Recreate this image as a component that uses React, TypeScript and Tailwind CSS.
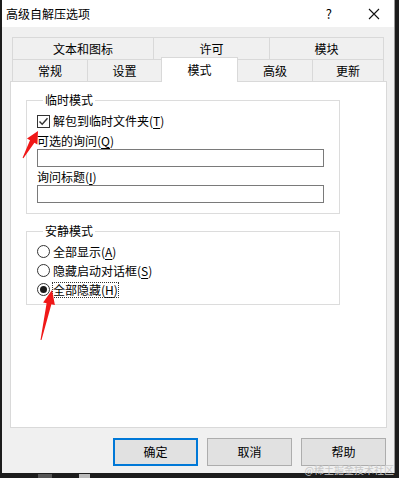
import React from "react";

const font = { fontFamily: '"Noto Sans CJK SC", "Noto Sans", sans-serif' };

function Tab({ label, w, last }: { label: string; w: string; last?: boolean }) {
  return (
    <div
      className={`${w} h-full flex items-center justify-center border-t border-l border-[#d9d9d9] ${last ? "border-r" : ""} text-[12px] text-black`}
    >
      {label}
    </div>
  );
}

function Checkbox() {
  return (
    <span className="w-[13px] h-[13px] border border-[#333] bg-white flex items-center justify-center shrink-0">
      <svg width="11" height="11" viewBox="0 0 11 11">
        <path d="M1.5 5.5 L4.2 8.3 L9.5 2.2" fill="none" stroke="#333" strokeWidth="1.4" />
      </svg>
    </span>
  );
}

function Radio({ on }: { on?: boolean }) {
  return (
    <span className="w-[13px] h-[13px] rounded-full border border-[#333] bg-white flex items-center justify-center shrink-0">
      {on && <span className="w-[7px] h-[7px] rounded-full bg-[#1a1a1a]" />}
    </span>
  );
}

function U({ c }: { c: string }) {
  return <span className="underline underline-offset-2">{c}</span>;
}

export default function App() {
  return (
    <div className="w-[399px] h-[478px] bg-[#1c1c1c] relative overflow-hidden" style={font}>
      <div className="ml-[2px] w-[393px] h-[473px] bg-[#f0f0f0] border-r border-[#9a9a9a] flex flex-col">
        {/* Title bar */}
        <div className="h-[27px] bg-white flex items-center pl-[4px] shrink-0">
          <span className="text-[12px] text-black">高级自解压选项</span>
          <span className="ml-auto text-[13px] text-black mr-[36px]">?</span>
          <svg width="12" height="12" viewBox="0 0 12 12" className="mr-[14px]">
            <path d="M1 1 L11 11 M11 1 L1 11" stroke="#111" strokeWidth="1.1" />
          </svg>
        </div>

        {/* Body */}
        <div className="flex-1 px-[8px] pt-[10px] flex flex-col">
          {/* Tabs */}
          <div className="ml-[2px] w-[372px]">
            <div className="h-[22px] flex">
              <Tab label="文本和图标" w="w-[141px]" />
              <Tab label="许可" w="w-[116px]" />
              <Tab label="模块" w="w-[115px]" last />
            </div>
            <div className="h-[22px] flex items-end">
              <Tab label="常规" w="w-[75px]" />
              <Tab label="设置" w="w-[74px]" />
              <div className="w-[77px] h-[25px] -mb-[1px] relative z-10 bg-white border-t border-l border-r border-[#d9d9d9] flex items-center justify-center text-[12px] text-black pb-[1px]">
                模式
              </div>
              <div className="w-[74px] h-full flex items-center justify-center border-t border-[#d9d9d9] text-[12px] text-black">
                高级
              </div>
              <Tab label="更新" w="w-[72px]" last />
            </div>
          </div>

          {/* Panel */}
          <div className="w-[377px] h-[347px] bg-white border border-[#d9d9d9] px-[15px] pt-[10px]">
            <fieldset className="w-[314px] border border-[#dcdcdc] pl-[10px] pb-[10px]">
              <legend className="ml-[6px] px-[2px] text-[12px] leading-[16px] text-black">临时模式</legend>
              <div className="flex items-center gap-[3px] h-[16px] mt-[5px] text-[12px] text-black">
                <Checkbox />
                <span>
                  解包到临时文件夹(<U c="T" />)
                </span>
              </div>
              <div className="text-[12px] leading-[14px] mt-[5px] text-black">
                可选的询问(<U c="Q" />)
              </div>
              <div className="w-[287px] h-[18px] border border-[#7a7a7a] bg-white mt-[1px]" />
              <div className="text-[12px] leading-[14px] mt-[3px] text-black">
                询问标题(<U c="I" />)
              </div>
              <div className="w-[287px] h-[18px] border border-[#7a7a7a] bg-white mt-[1px]" />
            </fieldset>

            <fieldset className="w-[314px] border border-[#dcdcdc] pl-[10px] pb-[5px] mt-[9px]">
              <legend className="ml-[6px] px-[2px] text-[12px] leading-[16px] text-black">安静模式</legend>
              <div className="flex items-center gap-[3px] h-[19px] mt-[3px] text-[12px] text-black">
                <Radio />
                <span>
                  全部显示(<U c="A" />)
                </span>
              </div>
              <div className="flex items-center gap-[3px] h-[19px] text-[12px] text-black">
                <Radio />
                <span>
                  隐藏启动对话框(<U c="S" />)
                </span>
              </div>
              <div className="flex items-center gap-[3px] h-[19px] text-[12px] text-black">
                <Radio on />
                <span className="outline outline-1 outline-dotted outline-[#333] leading-[14px]">
                  全部隐藏(<U c="H" />)
                </span>
              </div>
            </fieldset>
          </div>

          {/* Buttons */}
          <div className="flex gap-[9px] pl-[103px] mt-[10px]">
            <button className="w-[86px] h-[28px] bg-[#e1e1e1] border-2 border-[#0078d7] text-[12px] text-black">确定</button>
            <button className="w-[86px] h-[28px] bg-[#e1e1e1] border border-[#adadad] text-[12px] text-black">取消</button>
            <button className="w-[86px] h-[28px] bg-[#e1e1e1] border border-[#adadad] text-[12px] text-black">帮助</button>
          </div>
        </div>
      </div>

      {/* Bottom strip bits */}
      <div className="absolute left-[38px] top-[474px] w-[14px] h-[4px] bg-[#555]" />
      <div className="absolute left-[79px] top-[474px] w-[11px] h-[4px] bg-[#bbb]" />

      {/* Watermark */}
      <div className="absolute right-[5px] top-[464px] text-[10px] leading-[12px] text-[#c8c8c8]">@稀土掘金技术社区</div>

      {/* Red arrows */}
      <svg className="absolute left-0 top-0 pointer-events-none" width="399" height="478" viewBox="0 0 399 478">
        <polygon
          points="38,131 37.4,144.4 34.4,142.7 23.4,158.2 22.6,157.8 30,140.3 27,138.6"
          fill="#f01818"
        />
        <polygon
          points="52,290 54.9,305 51.4,304.2 41.5,340.1 40.5,339.9 46.6,303.2 43.1,302.4"
          fill="#f01818"
        />
      </svg>
    </div>
  );
}
